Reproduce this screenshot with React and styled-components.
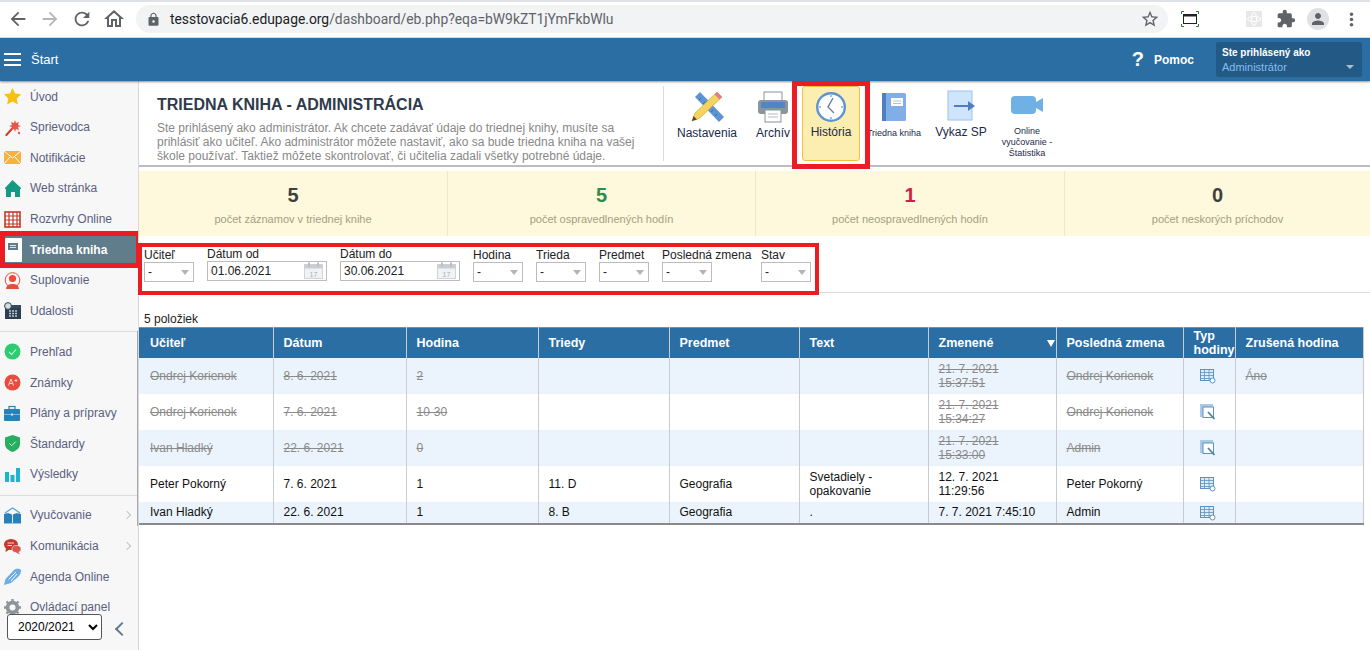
import React from "react";
import styled, { createGlobalStyle } from "styled-components";
import {
  MdArrowBack,
  MdArrowForward,
  MdRefresh,
  MdOutlineHome,
  MdLock,
  MdStarBorder,
  MdExtension,
  MdPerson,
  MdMoreVert,
} from "react-icons/md";

const GlobalStyle = createGlobalStyle`
  html, body {
    margin: 0;
    height: 100%;
    overflow: hidden;
    background: #fff;
    font-family: "Liberation Sans", Arial, sans-serif;
    font-size: 12px;
  }
  * { box-sizing: border-box; }
`;

const Page = styled.div`
  width: 1370px;
  height: 650px;
  display: flex;
  flex-direction: column;
  overflow: hidden;
`;

/* browser chrome */
const Chrome = styled.div`
  height: 38px;
  flex: none;
  display: flex;
  align-items: center;
  background: #fff;
  border-top: 2px solid #dee1e6;
  border-bottom: 1px solid #e0e0e0;
  padding: 0 0 1px 2px;
`;
const NavButton = styled.span`
  width: 32px;
  height: 24px;
  display: flex;
  align-items: center;
  justify-content: center;
  color: ${(p) => (p.$off ? "#b4b6b9" : "#5f6368")};
  font-size: ${(p) => p.$size || 22}px;
  margin-right: ${(p) => p.$gap || 0}px;
  flex: none;
`;
const UrlPill = styled.div`
  width: 1032px;
  height: 28px;
  margin-left: 6px;
  border-radius: 14px;
  background: #f1f3f4;
  display: flex;
  align-items: center;
  padding: 0 8px 0 10px;
  color: #5f6368;
  font-family: Roboto, sans-serif;
  font-size: 13.85px;
  flex: none;
`;
const UrlHost = styled.span`
  color: #202124;
  margin-left: 9px;
`;
const UrlPath = styled.span`
  flex: 1;
`;
const ChromeIcons = styled.div`
  display: flex;
  align-items: center;
  margin-left: 6px;
`;
const Avatar = styled.span`
  width: 22px;
  height: 22px;
  border-radius: 50%;
  background: #dfe1e5;
  color: #5f6368;
  font-size: 18px;
  display: flex;
  align-items: center;
  justify-content: center;
  margin: 0 6px 0 5px;
`;

/* blue top bar */
const TopBar = styled.header`
  height: 43px;
  flex: none;
  background: #2b6ea3;
  display: flex;
  align-items: center;
  color: #fff;
  padding: 0 8px 0 4px;
  box-shadow: 0 1px 2px rgba(0, 0, 0, 0.45);
  position: relative;
  z-index: 2;
`;
const Burger = styled.span`
  width: 17px;
  height: 13px;
  border-top: 2px solid #fff;
  border-bottom: 2px solid #fff;
  display: flex;
  align-items: center;
  margin-right: 10px;
  &::before {
    content: "";
    height: 2px;
    width: 100%;
    background: #fff;
  }
`;
const StartLabel = styled.span`
  font-size: 13px;
  flex: 1;
`;
const HelpMark = styled.span`
  font-size: 20px;
  font-weight: 700;
  margin-right: 10px;
`;
const HelpLabel = styled.span`
  font-size: 12px;
  font-weight: 700;
  margin-right: 22px;
`;
const UserBox = styled.div`
  width: 146px;
  height: 35px;
  background: #235a85;
  border-radius: 2px;
  padding: 3px 6px;
  position: relative;
  font-size: 11px;
  line-height: 15px;
  display: flex;
  flex-direction: column;
`;
const UserTitle = styled.span`
  font-weight: 700;
  font-size: 10px;
`;
const UserRole = styled.span`
  color: #86bdf0;
`;
const UserCaret = styled.span`
  position: absolute;
  right: 8px;
  bottom: 8px;
  border-left: 4px solid transparent;
  border-right: 4px solid transparent;
  border-top: 4px solid #a9bfd2;
`;

const Body = styled.div`
  flex: 1;
  display: flex;
  min-height: 0;
`;

/* left menu */
const Sidebar = styled.nav`
  width: 139px;
  flex: none;
  background: #f7f7f7;
  border-right: 1px solid #d8d8d8;
  padding-top: 0.4px;
  position: relative;
  overflow: hidden;
`;
const MenuItem = styled.div`
  height: 30.6px;
  display: flex;
  align-items: center;
  gap: 9px;
  padding-left: 4px;
  color: #5a6080;
  position: relative;
  white-space: nowrap;
`;
const ActiveItem = styled(MenuItem)`
  height: 37px;
  margin: -3.2px -1px -3.2px 0;
  border: 5px solid #ed1c24;
  border-right-width: 3px;
  padding-left: 0;
  gap: 8px;
  background: #607d8b;
  color: #fff;
  font-weight: 700;
`;
const MenuIcon = styled.svg`
  width: 17px;
  height: ${(p) => p.$h || 17}px;
  flex: none;
`;
const MenuChevron = styled.span`
  position: absolute;
  right: 8px;
  top: 12px;
  width: 6px;
  height: 6px;
  border-top: 1px solid #c4c4c4;
  border-right: 1px solid #c4c4c4;
  transform: rotate(45deg);
`;
const MenuRule = styled.div`
  height: 1px;
  background: #dcdcdc;
  margin: 5px 0 4.5px;
`;
const ScrollThumb = styled.span`
  position: absolute;
  top: 250px;
  right: 0;
  width: 1px;
  height: 195px;
  background: #a8a8a8;
`;
const YearBar = styled.div`
  position: absolute;
  left: 7px;
  top: 533px;
  display: flex;
  align-items: center;
  gap: 15px;
`;
const YearSelect = styled.select`
  width: 95px;
  height: 26px;
  font-family: "Liberation Sans", Arial, sans-serif;
  font-size: 12px;
  color: #000;
  background: #fff;
  border: 1px solid #555;
  border-radius: 3px;
  padding-left: 6px;
`;
const Collapse = styled.span`
  width: 10px;
  height: 10px;
  border-left: 2px solid #5f7a90;
  border-bottom: 2px solid #5f7a90;
  transform: rotate(45deg);
  margin-top: 4px;
`;

const Main = styled.main`
  flex: 1;
  min-width: 0;
`;

/* heading with tool buttons */
const Heading = styled.section`
  height: 86px;
  display: flex;
  border-bottom: 2px solid #bdbdbd;
  padding-top: 1px;
`;
const Intro = styled.div`
  width: 524px;
  padding: 14px 0 0 18px;
  flex: none;
`;
const Title = styled.h1`
  margin: 0 0 6.5px;
  font-size: 16px;
  line-height: 18px;
  font-weight: 700;
  color: #2f3b4c;
`;
const Description = styled.p`
  margin: 0;
  font-size: 12px;
  line-height: 14.4px;
  color: #888;
  width: 490px;
`;
const ToolRow = styled.div`
  display: flex;
  align-items: flex-start;
  height: 75px;
  margin-top: 4px;
  border-left: 1px solid #dcdcdc;
  padding-left: 5px;
`;
const Tool = styled.div`
  width: ${(p) => p.$w}px;
  padding-left: ${(p) => p.$pad || 0}px;
  flex: none;
  display: flex;
  flex-direction: column;
  align-items: center;
  text-align: center;
  color: #1b2a4a;
  font-size: ${(p) => p.$font || 12}px;
  line-height: ${(p) => (p.$font ? "11px" : "14px")};
  white-space: nowrap;
`;
const ToolIcon = styled.svg`
  width: 34px;
  height: 34px;
  margin-top: ${(p) => p.$top || 3}px;
  margin-bottom: ${(p) => p.$gap || 0}px;
  flex: none;
`;
const HistoryFrame = styled.div`
  width: 78px;
  height: 88px;
  flex: none;
  margin-top: -5px;
  border: 5px solid #ed1c24;
  background: #fff;
  position: relative;
  z-index: 3;
  padding: 0 5px 3px;
`;
const HistoryTool = styled.div`
  height: 100%;
  background: #fcedb0;
  border: 1px solid #f0c040;
  border-radius: 3px;
  padding-top: 2px;
  display: flex;
  flex-direction: column;
  align-items: center;
  color: #1b2a4a;
  line-height: 14px;
`;

/* counters */
const Stats = styled.section`
  display: grid;
  grid-template-columns: 308px 308px 309px 1fr;
  height: 65px;
  margin-top: 4px;
  background: #fef8dc;
`;
const Stat = styled.div`
  display: flex;
  flex-direction: column;
  align-items: center;
  padding-top: 12px;
  border-left: ${(p) => (p.$first ? "none" : "1px solid #f0e8c4")};
`;
const StatValue = styled.div`
  font-size: 20px;
  line-height: 24px;
  font-weight: 700;
  color: ${(p) => p.$color};
`;
const StatLabel = styled.div`
  font-size: 11px;
  line-height: 14px;
  margin-top: 5px;
  color: #a49f82;
`;

/* filters */
const FilterWrap = styled.div`
  height: 50px;
  border-bottom: 1px solid #dcdcdc;
  margin-left: -1px;
  margin-top: 7px;
`;
const Filters = styled.div`
  width: 681px;
  height: 52px;
  border: 4px solid #ed1c24;
  background: #fff;
  display: flex;
  align-items: flex-start;
  padding: 0 0 0 2px;
  gap: 13px;
  position: relative;
  z-index: 1;
`;
const Field = styled.label`
  display: flex;
  flex-direction: column;
  width: ${(p) => p.$w || 50}px;
  flex: none;
  color: #222;
  font-size: 12px;
  line-height: 14px;
  white-space: nowrap;
  padding-top: ${(p) => p.$top || 0}px;
`;
const FakeSelect = styled.div`
  height: 20px;
  width: 50px;
  border: 1px solid #bcbcbc;
  background: #fff;
  padding: 3px 3px;
  line-height: 12px;
  position: relative;
  &::after {
    content: "";
    position: absolute;
    right: 4px;
    top: 7px;
    border-left: 4px solid transparent;
    border-right: 4px solid transparent;
    border-top: 5px solid #b4b4b4;
  }
`;
const DateBox = styled.div`
  height: 20px;
  border: 1px solid #bcbcbc;
  display: flex;
  align-items: center;
  justify-content: space-between;
  padding: 0 1px 0 3px;
`;
const DateIcon = styled.svg`
  width: 22px;
  height: 18px;
`;

const Count = styled.div`
  height: 17px;
  margin-top: 17px;
  padding-left: 5px;
  line-height: 19px;
  color: #222;
`;

/* table */
const Table = styled.table`
  border-collapse: collapse;
  table-layout: fixed;
  width: 1224px;
  border-top: 1px solid #8a8a8a;
  border-bottom: 2px solid #8a8a8a;
  color: #111;
`;
const Th = styled.th`
  height: 30px;
  background: #2b6ea3;
  color: #fff;
  font-size: 12.5px;
  font-weight: 700;
  line-height: 14px;
  text-align: left;
  padding: 0 ${(p) => (p.$tight ? 0 : 10)}px 0 10px;
  border-left: 1px solid #c8ccd0;
  position: relative;
  &:first-child { border-left: none; padding-left: 11px; }
  &:last-child { border-right: 1px solid #c8ccd0; }
`;
const SortMark = styled.span`
  position: absolute;
  right: 1px;
  top: 12px;
  border-left: 4px solid transparent;
  border-right: 4px solid transparent;
  border-top: 7px solid #fff;
`;
const Tr = styled.tr`
  height: ${(p) => p.$h}px;
  background: ${(p) => (p.$tint ? "#ebf4fc" : "#fff")};
`;
const Td = styled.td`
  padding: 0 10px;
  font-size: 12px;
  line-height: 14px;
  vertical-align: middle;
  border-left: 1px solid #c8ccd0;
  color: ${(p) => (p.$old ? "#8a8a8a" : "#111")};
  text-decoration: ${(p) => (p.$old ? "line-through" : "none")};
  &:first-child { border-left: none; padding-left: 11px; }
  &:last-child { border-right: 1px solid #c8ccd0; }
`;
const TypeIcon = styled.svg`
  display: block;
  width: 16px;
  height: 16px;
  margin: 1px 0 0 6px;
`;

const icons = {
  star: <path d="M8.5 0l2.6 5.6 6 .7-4.4 4.2 1.2 6-5.4-3-5.4 3 1.2-6L0 6.3l6-.7z" fill="#f5c211" />,
  wand: (
    <g>
      <path d="M1 16l8-9 1.5 1.5-8 9z" fill="#d9372c" />
      <path d="M11 1l1 3 3-1-1 3 3 1-3 1 1 3-3-1-1 3-1-3-3 1 1-3-3-1 3-1-1-3 3 1z" fill="#e8564a" />
      <circle cx="15" cy="14" r="1.2" fill="#e8564a" />
    </g>
  ),
  mail: (
    <g>
      <rect x="0" y="2" width="17" height="13" fill="#f7b13c" />
      <path d="M0 2l8.5 7L17 2M0 15l6-7M17 15l-6-7" fill="none" stroke="#fff" strokeWidth="1" />
    </g>
  ),
  house: <path d="M8.5 0L17 8v1h-1v8h-5v-5H7v5H2V9H1V8z" fill="#149a80" />,
  grid: (
    <g>
      <rect x="1" y="1" width="15" height="15" fill="#fff" stroke="#c0392b" strokeWidth="1.6" />
      <path d="M1 5h15M1 9h15M1 13h15M5 1v15M9 1v15M13 1v15" stroke="#c0392b" strokeWidth="1.2" />
    </g>
  ),
  person: (
    <g>
      <circle cx="8.5" cy="8" r="7.3" fill="none" stroke="#e74c3c" strokeWidth="1" />
      <circle cx="8.5" cy="6.5" r="3.6" fill="#e74c3c" />
      <path d="M2 17c.5-4 3-5 6.5-5s6 1 6.5 5z" fill="#e74c3c" />
    </g>
  ),
  events: (
    <g>
      <rect x="1" y="3" width="16" height="14" fill="#2c3e50" />
      <rect x="1" y="3" width="16" height="3" fill="#34495e" />
      <path d="M5 9h9M5 11.5h9M5 14h9" stroke="#bfc9d2" strokeWidth="1.3" strokeDasharray="2 1" />
      <circle cx="4" cy="4" r="3.4" fill="#d5dde3" stroke="#2c3e50" />
    </g>
  ),
  check: (
    <g>
      <circle cx="8.5" cy="8.5" r="8" fill="#2ecc71" />
      <path d="M5 9l2.5 2.5L12 6.5" fill="none" stroke="#d8f8e5" strokeWidth="1.1" />
    </g>
  ),
  grade: (
    <g>
      <circle cx="8.5" cy="8.5" r="8" fill="#e74c3c" />
      <path d="M4.5 11.5L7 5l2.5 6.5M5.5 9.5h3M10.5 6.5h3M12 5v3" fill="none" stroke="#fbd5d0" strokeWidth="1" />
    </g>
  ),
  case: (
    <g>
      <rect x="0" y="4" width="16" height="12" rx="1" fill="#2980b9" />
      <rect x="5" y="1.5" width="6" height="3" fill="none" stroke="#2980b9" strokeWidth="1.2" />
      <path d="M0 9.5h16" stroke="#8fc3e6" strokeWidth=".8" />
      <rect x="7" y="8.5" width="2" height="2" fill="#cfe6f5" />
    </g>
  ),
  shield: (
    <g>
      <path d="M8.5 0l7.5 2.5V9c0 4-3.5 6.5-7.5 8C4.5 15.5 1 13 1 9V2.5z" fill="#27ae60" />
      <path d="M5.5 8.5l2.2 2.2 4-4" fill="none" stroke="#d8f8e5" strokeWidth="1" />
    </g>
  ),
  bars: (
    <g fill="#1cb5d0">
      <rect x="1" y="6" width="4" height="10" />
      <rect x="6.5" y="9" width="4" height="7" />
      <rect x="12" y="2" width="4" height="14" />
    </g>
  ),
  book: (
    <g>
      <path d="M1 6L8.5 1 16 6" fill="none" stroke="#5fa8d8" strokeWidth="1.4" />
      <path d="M0 7c3-1 6-1 8.5 1C11 6 14 6 17 7v9H0z" fill="#2980b9" />
      <path d="M8.5 8v8" stroke="#d8ecf8" strokeWidth="1" />
      <path d="M0 16.5h17" stroke="#8fc3e6" />
    </g>
  ),
  chat: (
    <g>
      <ellipse cx="7" cy="6.5" rx="7" ry="5.5" fill="#c0392b" />
      <path d="M2 10l-.5 4 4-2.5z" fill="#c0392b" />
      <ellipse cx="12.5" cy="11" rx="4.5" ry="3.5" fill="#d9534f" stroke="#f7f7f7" strokeWidth=".6" />
      <path d="M14 13.5l2 3-4-2z" fill="#d9534f" />
      <path d="M3.5 5h6.500M3.5 7.5h4.500" stroke="#f6d5d2" strokeWidth="1" />
    </g>
  ),
  pen: (
    <g>
      <path d="M0 17l1.5-6L10 2c2.5-2 6-1 7 0 0 3-1 5-3 7l-7 6z" fill="#6aaee4" />
      <path d="M4.5 11.5L12 4M7 13l6-7" stroke="#f7f7f7" strokeWidth="1" />
    </g>
  ),
  gear: (
    <g>
      <circle cx="8.5" cy="8.5" r="5" fill="none" stroke="#8d9599" strokeWidth="3.6" />
      <path d="M8.5 0v17M0 8.5h17M2.5 2.5l12 12M14.5 2.5l-12 12" stroke="#8d9599" strokeWidth="2.4" />
      <circle cx="8.5" cy="8.5" r="3" fill="#f7f7f7" />
    </g>
  ),
};

const menuTop = [
  ["star", "Úvod"],
  ["wand", "Sprievodca"],
  ["mail", "Notifikácie"],
  ["house", "Web stránka"],
  ["grid", "Rozvrhy Online"],
  ["note", "Triedna kniha", "active"],
  ["person", "Suplovanie"],
  ["events", "Udalosti"],
];
const menuMiddle = [
  ["check", "Prehľad"],
  ["grade", "Známky"],
  ["case", "Plány a prípravy"],
  ["shield", "Štandardy"],
  ["bars", "Výsledky"],
];
const menuBottom = [
  ["book", "Vyučovanie", "more"],
  ["chat", "Komunikácia", "more"],
  ["pen", "Agenda Online"],
  ["gear", "Ovládací panel"],
];

const renderMenu = (items) =>
  items.map(([icon, label, flag]) =>
    flag === "active" ? (
      <ActiveItem key={label}>
        <MenuIcon viewBox="0 0 17 24" $h={24}>
          <rect width="17" height="24" rx="1" fill="#fff" />
          <rect x="3" y="5" width="10" height="7" fill="#607d8b" />
          <path d="M5 7.5h6M5 9.5h6" stroke="#fff" strokeWidth=".8" />
        </MenuIcon>
        {label}
      </ActiveItem>
    ) : (
      <MenuItem key={label}>
        <MenuIcon viewBox="0 0 17 17">{icons[icon]}</MenuIcon>
        {label}
        {flag === "more" && <MenuChevron />}
      </MenuItem>
    )
  );

const stats = [
  ["5", "počet záznamov v triednej knihe", "#3f3f3f"],
  ["5", "počet ospravedlnených hodín", "#2e8b4e"],
  ["1", "počet neospravedlnených hodín", "#d0204a"],
  ["0", "počet neskorých príchodov", "#3f3f3f"],
];

const columns = [134, 133, 132, 131, 130, 129, 128, 127, 52, 128];

const heads = ["Učiteľ", "Dátum", "Hodina", "Triedy", "Predmet", "Text", "Zmenené", "Posledná zmena", "Typ hodiny", "Zrušená hodina"];

const rows = [
  { h: 36, old: true, icon: "grid", cells: ["Ondrej Korienok", "8. 6. 2021", "2", "", "", "", ["21. 7. 2021", "15:37:51"], "Ondrej Korienok"], last: "Áno" },
  { h: 36, old: true, icon: "pages", cells: ["Ondrej Korienok", "7. 6. 2021", "10-30", "", "", "", ["21. 7. 2021", "15:34:27"], "Ondrej Korienok"] },
  { h: 36, old: true, icon: "pages", cells: ["Ivan Hladký", "22. 6. 2021", "0", "", "", "", ["21. 7. 2021", "15:33:00"], "Admin"] },
  { h: 36, icon: "grid", cells: ["Peter Pokorný", "7. 6. 2021", "1", "11. D", "Geografia", ["Svetadiely -", "opakovanie"], ["12. 7. 2021", "11:29:56"], "Peter Pokorný"] },
  { h: 22, icon: "grid", cells: ["Ivan Hladký", "22. 6. 2021", "1", "8. B", "Geografia", ".", "7. 7. 2021 7:45:10", "Admin"] },
];

const GridType = () => (
  <TypeIcon viewBox="0 0 16 16">
    <rect x="0.5" y="1.5" width="13" height="11" fill="#dcebf7" stroke="#5b93c4" />
    <path d="M0.5 4.5h13M0.5 7.5h13M0.5 10.5h13M4.5 1.5v11M9 1.5v11" stroke="#5b93c4" strokeWidth=".8" />
    <circle cx="12.5" cy="12.5" r="2.5" fill="#fff" stroke="#5b93c4" />
  </TypeIcon>
);
const PagesType = () => (
  <TypeIcon viewBox="0 0 16 16">
    <rect x="0.5" y="0.5" width="12" height="12" fill="#a9cbe6" stroke="#a9cbe6" />
    <rect x="3" y="3" width="10.5" height="10.5" fill="#fff" stroke="#5b93c4" />
    <path d="M8 8l6.5 7" stroke="#4b7fae" strokeWidth="1.8" />
  </TypeIcon>
);

const Lines = ({ value }) =>
  Array.isArray(value)
    ? value.map((line, i) => (
        <React.Fragment key={line}>
          {i > 0 && <br />}
          {line}
        </React.Fragment>
      ))
    : value;

const CalendarIcon = () => (
  <DateIcon viewBox="0 0 22 18">
    <rect x="1.5" y="2.5" width="18" height="14" fill="#f0f2f4" stroke="#d0d4d8" />
    <rect x="1.5" y="2.5" width="18" height="4" fill="#c9ced3" />
    <rect x="5" y="0.5" width="2" height="4" fill="#b8bec4" />
    <rect x="14" y="0.5" width="2" height="4" fill="#b8bec4" />
    <text x="10.5" y="14.5" fontSize="7" textAnchor="middle" fill="#a8b0b8" fontFamily="Liberation Sans">17</text>
  </DateIcon>
);

const App = () => (
  <Page>
    <GlobalStyle />
    <Chrome>
      <NavButton><MdArrowBack /></NavButton>
      <NavButton $off><MdArrowForward /></NavButton>
      <NavButton><MdRefresh /></NavButton>
      <NavButton $size={24}><MdOutlineHome /></NavButton>
      <UrlPill>
        <MdLock size={15} />
        <UrlHost>tesstovacia6.edupage.org</UrlHost>
        <UrlPath>/dashboard/eb.php?eqa=bW9kZT1jYmFkbWlu</UrlPath>
        <MdStarBorder size={20} />
      </UrlPill>
      <ChromeIcons>
        <NavButton $gap={32}>
          <svg width="18" height="16" viewBox="0 0 18 16">
            <rect x="2.5" y="3.5" width="13" height="9" fill="none" stroke="#222" />
            <rect x="2.5" y="3.5" width="13" height="2" fill="#222" />
            <path d="M0.5 3V.5H3M15 .5h2.5V3M.5 13v2.5H3M15 15.5h2.5V13" fill="none" stroke="#2e7d32" />
          </svg>
        </NavButton>
        <NavButton>
          <svg width="16" height="16" viewBox="0 0 16 16">
            <rect width="16" height="16" fill="#e8e8e8" />
            <ellipse cx="8" cy="8" rx="6.5" ry="2.5" fill="none" stroke="#fff" />
            <ellipse cx="8" cy="8" rx="2.5" ry="6.5" fill="none" stroke="#fff" />
          </svg>
        </NavButton>
        <NavButton $size={20}><MdExtension /></NavButton>
        <Avatar><MdPerson /></Avatar>
        <NavButton $size={21}><MdMoreVert /></NavButton>
      </ChromeIcons>
    </Chrome>

    <TopBar>
      <Burger />
      <StartLabel>Štart</StartLabel>
      <HelpMark>?</HelpMark>
      <HelpLabel>Pomoc</HelpLabel>
      <UserBox>
        <UserTitle>Ste prihlásený ako</UserTitle>
        <UserRole>Administrátor</UserRole>
        <UserCaret />
      </UserBox>
    </TopBar>

    <Body>
      <Sidebar>
        {renderMenu(menuTop)}
        <MenuRule />
        {renderMenu(menuMiddle)}
        <MenuRule />
        {renderMenu(menuBottom)}
        <ScrollThumb />
        <YearBar>
          <YearSelect defaultValue="2020/2021">
            <option>2020/2021</option>
          </YearSelect>
          <Collapse />
        </YearBar>
      </Sidebar>

      <Main>
        <Heading>
          <Intro>
            <Title>TRIEDNA KNIHA - ADMINISTRÁCIA</Title>
            <Description>
              Ste prihlásený ako administrátor. Ak chcete zadávať údaje do triednej knihy, musíte sa
              prihlásiť ako učiteľ. Ako administrátor môžete nastaviť, ako sa bude triedna kniha na vašej
              škole používať. Taktiež môžete skontrolovať, či učitelia zadali všetky potrebné údaje.
            </Description>
          </Intro>
          <ToolRow>
            <Tool $w={76}>
              <ToolIcon viewBox="0 0 34 34" $gap={3}>
                <path d="M5 8l5-5 24 25-5 5z" fill="#5b93d3" />
                <path d="M11 9l-2 2M15 13l-2 2M19 17l-2 2M23 21l-2 2M27 25l-2 2" stroke="#2f6db0" />
                <path d="M27 3l5 5L10 29l-8 3 3-8z" fill="#f4d35e" stroke="#c9a227" strokeWidth=".6" />
                <path d="M27 3l5 5-2.5 2.5-5-5z" fill="#e87a90" />
                <path d="M2 32l1.5-5 3.5 3.5z" fill="#5a4a2a" />
              </ToolIcon>
              Nastavenia
            </Tool>
            <Tool $w={47} $pad={9}>
              <ToolIcon viewBox="0 0 34 34" $top={4} $gap={2}>
                <rect x="8" y="2" width="18" height="10" fill="#fff" stroke="#8a939b" />
                <rect x="2" y="10" width="30" height="14" rx="3" fill="#8b959d" />
                <rect x="5" y="12" width="24" height="6" fill="#4f86c6" />
                <rect x="9" y="20" width="16" height="12" fill="#fff" stroke="#8a939b" />
                <path d="M12 24h10M12 27h10" stroke="#b5bcc2" />
              </ToolIcon>
              Archív
            </Tool>
            <HistoryFrame>
              <HistoryTool>
                <ToolIcon viewBox="0 0 34 34" $top={1} $gap={1}>
                  <circle cx="17" cy="17" r="13.8" fill="#fff" stroke="#5b93d3" strokeWidth="2.4" />
                  <path d="M17 5v2M17 27v2M5 17h2M27 17h2" stroke="#5b7fa6" />
                  <path d="M19 8l-5 9 6 6" fill="none" stroke="#6a7f94" strokeWidth="1.4" />
                </ToolIcon>
                História
              </HistoryTool>
            </HistoryFrame>
            <Tool $w={48} $font={9}>
              <ToolIcon viewBox="0 0 34 34" $top={5} $gap={3}>
                <rect x="5" y="2" width="24" height="28" rx="1.5" fill="#82aee8" />
                <rect x="5" y="2" width="4" height="28" fill="#4f7fc0" />
                <rect x="14" y="7" width="12" height="8" fill="#fff" />
                <path d="M16 10h8M16 12.5h8" stroke="#a9c4e6" />
              </ToolIcon>
              Triedna kniha
            </Tool>
            <Tool $w={86}>
              <ToolIcon viewBox="0 0 34 34" $top={4} $gap={1}>
                <rect x="4" y="1" width="24" height="29" fill="#cfe5fb" stroke="#9cc2e8" />
                <path d="M10 15h14v-4l7 5-7 5v-4H10z" fill="#4f7fc0" />
              </ToolIcon>
              Vykaz SP
            </Tool>
            <Tool $w={46} $font={9}>
              <ToolIcon viewBox="0 0 34 34" $gap={3}>
                <rect x="1" y="7" width="25" height="18" rx="4" fill="#6fb1e4" />
                <path d="M26 13l7-4v14l-7-4z" fill="#6fb1e4" />
              </ToolIcon>
              Online
              <br />
              vyučovanie -
              <br />
              Štatistika
            </Tool>
          </ToolRow>
        </Heading>

        <Stats>
          {stats.map(([value, label, color], i) => (
            <Stat key={label} $first={i === 0}>
              <StatValue $color={color}>{value}</StatValue>
              <StatLabel>{label}</StatLabel>
            </Stat>
          ))}
        </Stats>

        <FilterWrap>
          <Filters>
            <Field $top={1}>Učiteľ<FakeSelect>-</FakeSelect></Field>
            <Field $w={120}>Dátum od<DateBox>01.06.2021<CalendarIcon /></DateBox></Field>
            <Field $w={120}>Dátum do<DateBox>30.06.2021<CalendarIcon /></DateBox></Field>
            <Field $top={1}>Hodina<FakeSelect>-</FakeSelect></Field>
            <Field $top={1}>Trieda<FakeSelect>-</FakeSelect></Field>
            <Field $top={1}>Predmet<FakeSelect>-</FakeSelect></Field>
            <Field $w={86} $top={1}>Posledná zmena<FakeSelect>-</FakeSelect></Field>
            <Field $top={1}>Stav<FakeSelect>-</FakeSelect></Field>
          </Filters>
        </FilterWrap>

        <Count>5 položiek</Count>

        <Table>
          <colgroup>
            {columns.map((w, i) => (
              <col key={i} style={{ width: w }} />
            ))}
          </colgroup>
          <thead>
            <tr>
              {heads.map((head, i) => (
                <Th key={head} $tight={i === 8}>
                  {head}
                  {i === 6 && <SortMark />}
                </Th>
              ))}
            </tr>
          </thead>
          <tbody>
            {rows.map((row, r) => (
              <Tr key={r} $h={row.h} $tint={r % 2 === 0}>
                {row.cells.map((cell, c) => (
                  <Td key={c} $old={row.old}>
                    <Lines value={cell} />
                  </Td>
                ))}
                <Td>{row.icon === "grid" ? <GridType /> : <PagesType />}</Td>
                <Td $old={row.old}>{row.last}</Td>
              </Tr>
            ))}
          </tbody>
        </Table>
      </Main>
    </Body>
  </Page>
);

export default App;
